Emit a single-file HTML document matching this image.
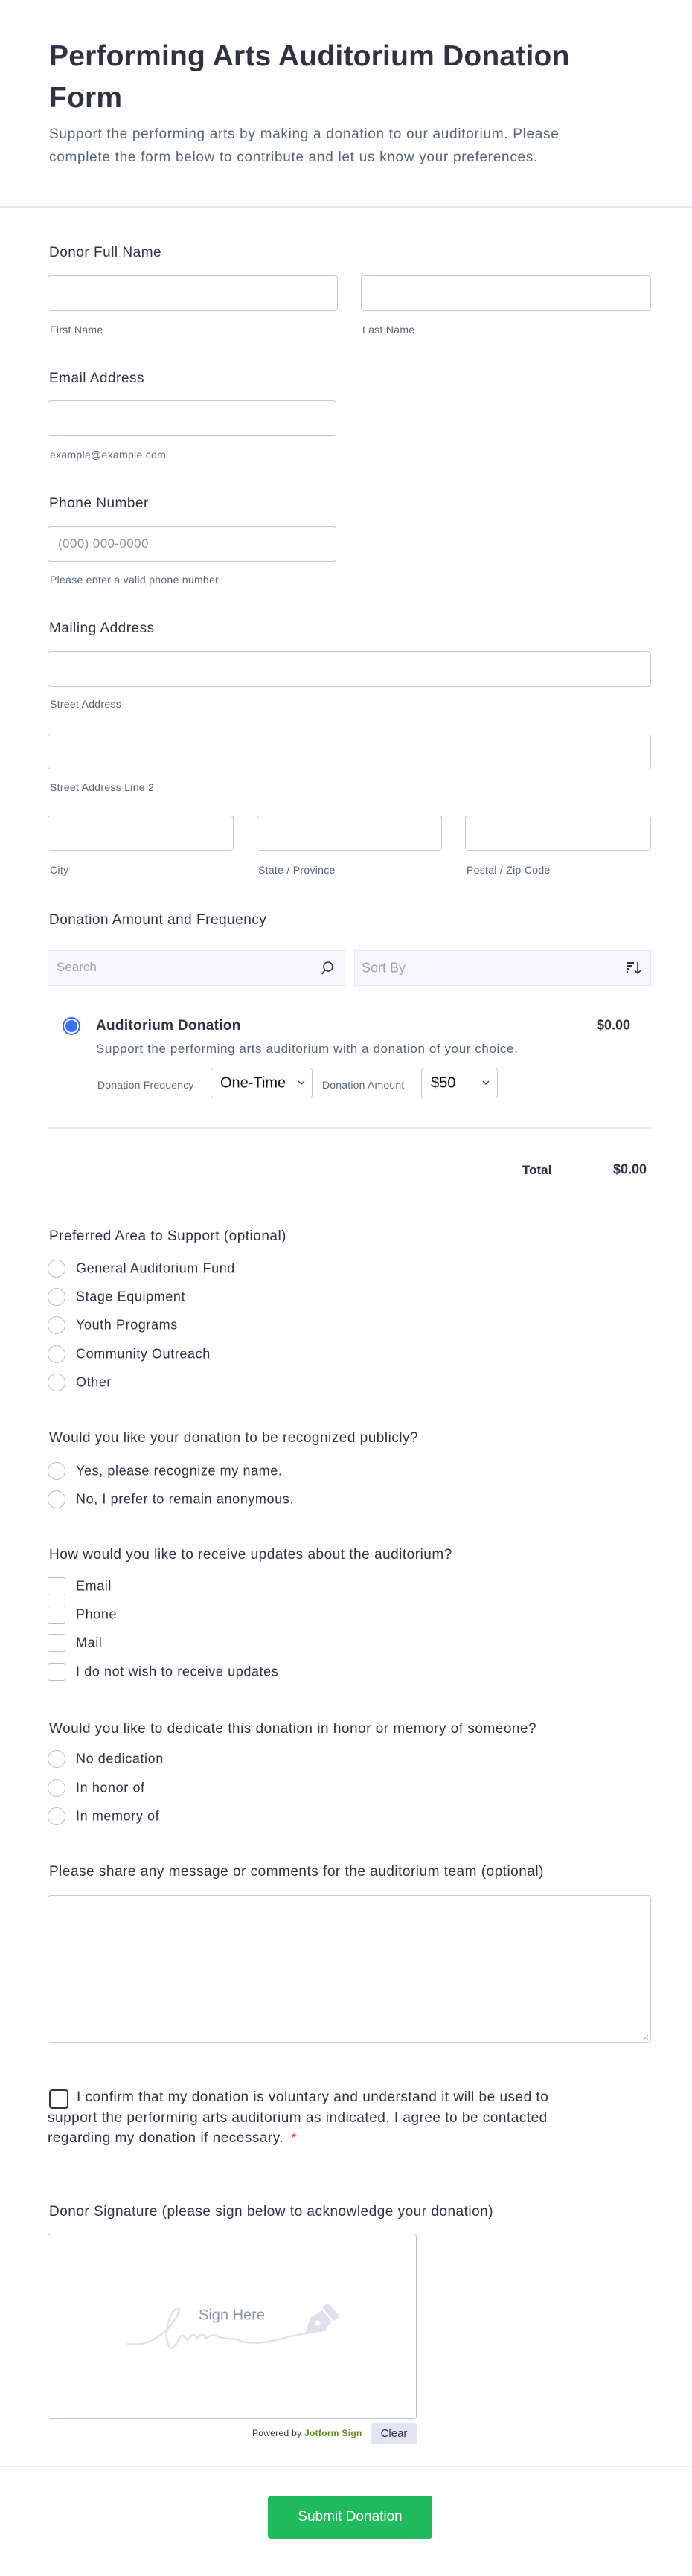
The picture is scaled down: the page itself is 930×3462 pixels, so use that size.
<!DOCTYPE html>
<html><head><meta charset="utf-8"><style>
*{margin:0;padding:0;box-sizing:border-box}
body{width:930px;height:3462px;background:#fff;font-family:"Liberation Sans",sans-serif;color:#2c3345;position:relative;overflow:hidden}
.a{position:absolute;white-space:nowrap}
.lbl{font-size:19px;letter-spacing:0.5px;color:#2c3345;transform:translateY(-50%)}
.sub{font-size:14px;letter-spacing:0.3px;color:#57647e;transform:translateY(-50%)}
.inp{position:absolute;border:1px solid #c3cad8;border-radius:4px;background:#fff}
.rad{position:absolute;width:24px;height:24px;border:1px solid #b8bdc9;border-radius:50%;background:#fff}
.chk{position:absolute;width:24px;height:24px;border:1px solid #b8bdc9;border-radius:3px;background:#fff}
.opt{font-size:18px;letter-spacing:0.6px;color:#2c3345;transform:translateY(-50%)}
</style></head><body>
<div class="a" style="left:66px;top:48px;font-size:39px;font-weight:bold;line-height:56px;color:#2c3345;letter-spacing:0.2px">Performing Arts Auditorium Donation<br>Form</div>
<div class="a" style="left:66px;top:165px;font-size:19px;letter-spacing:0.7px;line-height:31px;color:#57647e">Support the performing arts by making a donation to our auditorium. Please<br>complete the form below to contribute and let us know your preferences.</div>
<div class="a" style="left:0;top:277px;width:930px;height:2px;background:#e3e5ef"></div>

<div class="a lbl" style="left:66px;top:340px">Donor Full Name</div>
<div class="inp" style="left:64px;top:370px;width:390px;height:48px"></div>
<div class="inp" style="left:485px;top:370px;width:390px;height:48px"></div>
<div class="a sub" style="left:67px;top:443px">First Name</div>
<div class="a sub" style="left:487px;top:443px">Last Name</div>

<div class="a lbl" style="left:66px;top:509px">Email Address</div>
<div class="inp" style="left:64px;top:538px;width:388px;height:48px"></div>
<div class="a sub" style="left:67px;top:611px">example@example.com</div>

<div class="a lbl" style="left:66px;top:677px">Phone Number</div>
<div class="inp" style="left:64px;top:707px;width:388px;height:48px"></div>
<div class="a" style="left:78px;top:731px;font-size:17px;letter-spacing:0.4px;color:#8a94a8;transform:translateY(-50%)">(000) 000-0000</div>
<div class="a sub" style="left:67px;top:779px">Please enter a valid phone number.</div>

<div class="a lbl" style="left:66px;top:845px">Mailing Address</div>
<div class="inp" style="left:64px;top:875px;width:811px;height:48px"></div>
<div class="a sub" style="left:67px;top:946px">Street Address</div>
<div class="inp" style="left:64px;top:986px;width:811px;height:48px"></div>
<div class="a sub" style="left:67px;top:1058px">Street Address Line 2</div>
<div class="inp" style="left:64px;top:1096px;width:250px;height:48px"></div>
<div class="inp" style="left:345px;top:1096px;width:249px;height:48px"></div>
<div class="inp" style="left:625px;top:1096px;width:250px;height:48px"></div>
<div class="a sub" style="left:67px;top:1169px">City</div>
<div class="a sub" style="left:347px;top:1169px">State / Province</div>
<div class="a sub" style="left:627px;top:1169px">Postal / Zip Code</div>

<div class="a lbl" style="left:66px;top:1237px">Donation Amount and Frequency</div>
<div class="a" style="left:64px;top:1277px;width:400px;height:48px;background:#f7f8fe;border:1px solid #e3e6f3"></div>
<div class="a" style="left:76px;top:1300px;font-size:17px;color:#9aa3b5;transform:translateY(-50%)">Search</div>
<svg class="a" style="left:430px;top:1290px" width="20" height="22" viewBox="0 0 20 22"><circle cx="11" cy="9" r="6" fill="none" stroke="#2c3345" stroke-width="1.6"/><path d="M7 13 L3 19" stroke="#2c3345" stroke-width="1.6"/></svg>
<div class="a" style="left:476px;top:1277px;width:399px;height:48px;background:#f7f8fe;border:1px solid #e3e6f3"></div>
<div class="a" style="left:486px;top:1301px;font-size:18px;color:#9aa3b5;transform:translateY(-50%)">Sort By</div>
<svg class="a" style="left:841px;top:1290px" width="22" height="22" viewBox="0 0 22 22"><path d="M2 4h9M2 8h7M2 12h3M2 16h1" stroke="#2c3345" stroke-width="2"/><path d="M16 3v15M12 14l4 4 4-4" fill="none" stroke="#2c3345" stroke-width="1.6"/></svg>

<div class="a" style="left:84px;top:1367px;width:24px;height:24px;border-radius:50%;border:2px solid #2f6bff;background:#fff"></div>
<div class="a" style="left:88px;top:1371px;width:16px;height:16px;border-radius:50%;background:#3a70ff"></div>
<div class="a" style="left:129px;top:1379px;font-size:19px;letter-spacing:0.3px;font-weight:bold;transform:translateY(-50%)">Auditorium Donation</div>
<div class="a" style="left:802px;top:1378px;font-size:18px;font-weight:bold;transform:translateY(-50%)">$0.00</div>
<div class="a" style="left:129px;top:1410px;font-size:17px;letter-spacing:0.6px;color:#57647e;transform:translateY(-50%)">Support the performing arts auditorium with a donation of your choice.</div>
<div class="a" style="left:131px;top:1458px;font-size:14px;letter-spacing:0.2px;color:#57647e;transform:translateY(-50%)">Donation Frequency</div>
<div class="inp" style="left:283px;top:1435px;width:137px;height:41px"></div>
<div class="a" style="left:296px;top:1456px;font-size:20px;color:#111;transform:translateY(-50%)">One-Time</div>
<svg class="a" style="left:400px;top:1451px" width="10" height="8"><path d="M1 2l4 4 4-4" fill="none" stroke="#444" stroke-width="1.5"/></svg>
<div class="a" style="left:433px;top:1458px;font-size:14px;letter-spacing:0.2px;color:#57647e;transform:translateY(-50%)">Donation Amount</div>
<div class="inp" style="left:566px;top:1435px;width:103px;height:41px"></div>
<div class="a" style="left:579px;top:1456px;font-size:20px;color:#111;transform:translateY(-50%)">$50</div>
<svg class="a" style="left:648px;top:1451px" width="10" height="8"><path d="M1 2l4 4 4-4" fill="none" stroke="#444" stroke-width="1.5"/></svg>
<div class="a" style="left:64px;top:1515px;width:811px;height:2px;background:#e8e9ee"></div>
<div class="a" style="left:702px;top:1573px;font-size:17px;font-weight:bold;transform:translateY(-50%)">Total</div>
<div class="a" style="left:824px;top:1572px;font-size:18px;font-weight:bold;transform:translateY(-50%)">$0.00</div>

<div class="a lbl" style="left:66px;top:1662px">Preferred Area to Support (optional)</div>
<div class="rad" style="left:64px;top:1693px"></div><div class="a opt" style="left:102px;top:1705px">General Auditorium Fund</div>
<div class="rad" style="left:64px;top:1731px"></div><div class="a opt" style="left:102px;top:1743px">Stage Equipment</div>
<div class="rad" style="left:64px;top:1769px"></div><div class="a opt" style="left:102px;top:1781px">Youth Programs</div>
<div class="rad" style="left:64px;top:1808px"></div><div class="a opt" style="left:102px;top:1820px">Community Outreach</div>
<div class="rad" style="left:64px;top:1846px"></div><div class="a opt" style="left:102px;top:1858px">Other</div>

<div class="a lbl" style="left:66px;top:1933px">Would you like your donation to be recognized publicly?</div>
<div class="rad" style="left:64px;top:1965px"></div><div class="a opt" style="left:102px;top:1977px">Yes, please recognize my name.</div>
<div class="rad" style="left:64px;top:2003px"></div><div class="a opt" style="left:102px;top:2015px">No, I prefer to remain anonymous.</div>

<div class="a lbl" style="left:66px;top:2090px">How would you like to receive updates about the auditorium?</div>
<div class="chk" style="left:64px;top:2120px"></div><div class="a opt" style="left:102px;top:2132px">Email</div>
<div class="chk" style="left:64px;top:2158px"></div><div class="a opt" style="left:102px;top:2170px">Phone</div>
<div class="chk" style="left:64px;top:2196px"></div><div class="a opt" style="left:102px;top:2208px">Mail</div>
<div class="chk" style="left:64px;top:2235px"></div><div class="a opt" style="left:102px;top:2247px">I do not wish to receive updates</div>

<div class="a lbl" style="left:66px;top:2324px">Would you like to dedicate this donation in honor or memory of someone?</div>
<div class="rad" style="left:64px;top:2352px"></div><div class="a opt" style="left:102px;top:2364px">No dedication</div>
<div class="rad" style="left:64px;top:2391px"></div><div class="a opt" style="left:102px;top:2403px">In honor of</div>
<div class="rad" style="left:64px;top:2429px"></div><div class="a opt" style="left:102px;top:2441px">In memory of</div>

<div class="a lbl" style="left:66px;top:2516px">Please share any message or comments for the auditorium team (optional)</div>
<div class="inp" style="left:64px;top:2547px;width:811px;height:199px"></div>
<svg class="a" style="left:862px;top:2733px" width="10" height="10"><path d="M9 2L2 9M9 6L6 9" stroke="#aaa" stroke-width="1"/></svg>

<div class="a" style="left:66px;top:2808px;width:26px;height:26px;border:2px solid #2c3345;border-radius:4px"></div>
<div class="a" style="left:103px;top:2805px;font-size:19px;letter-spacing:0.5px;line-height:27.5px;color:#2c3345">I confirm that my donation is voluntary and understand it will be used to</div>
<div class="a" style="left:64px;top:2832.5px;font-size:19px;letter-spacing:0.5px;line-height:27.5px;color:#2c3345">support the performing arts auditorium as indicated. I agree to be contacted<br>regarding my donation if necessary. <span style="color:#e02020;font-size:16px;vertical-align:top">&nbsp;*</span></div>

<div class="a lbl" style="left:66px;top:2973px">Donor Signature (please sign below to acknowledge your donation)</div>
<div class="a" style="left:64px;top:3002px;width:496px;height:249px;border:1px solid #b6c0d6;border-radius:4px"></div>
<div class="a" style="left:267px;top:3112px;font-size:20px;color:#8a97b3;transform:translateY(-50%)">Sign Here</div>
<svg class="a" style="left:165px;top:3095px" width="300" height="65" viewBox="0 0 300 65"><path d="M6 55 C30 58 45 50 60 35 C75 18 80 5 72 8 C60 14 55 45 62 58 C66 66 72 55 78 45 C82 40 84 50 88 50 C92 42 96 40 100 48 C104 42 108 40 112 48 C118 42 124 42 130 46 C140 50 150 46 160 52 C180 56 200 52 225 45 L250 40" fill="none" stroke="#dde2ee" stroke-width="2.5"/><path d="M245 42 L252 20 L268 10 L280 24 L272 38 Z" fill="#dde2ee"/><path d="M268 6 L276 0 L292 18 L284 24 Z" fill="#dde2ee"/><circle cx="262" cy="27" r="3.5" fill="#fff"/></svg>
<div class="a" style="left:339px;top:3270px;font-size:12px;letter-spacing:0.3px;color:#2c3345;transform:translateY(-50%)">Powered by <b style="color:#5a8a20">Jotform Sign</b></div>
<div class="a" style="left:499px;top:3257px;width:61px;height:28px;background:#e2e6f3;border-radius:3px;font-size:15px;color:#2c3345;text-align:center;line-height:28px">Clear</div>

<div class="a" style="left:0;top:3314px;width:930px;height:1px;background:#eceef3"></div>
<div class="a" style="left:360px;top:3354px;width:221px;height:58px;background:#1fbb5c;border-radius:4px;color:#fff;font-size:19px;text-align:center;line-height:58px">Submit Donation</div>
</body></html>
